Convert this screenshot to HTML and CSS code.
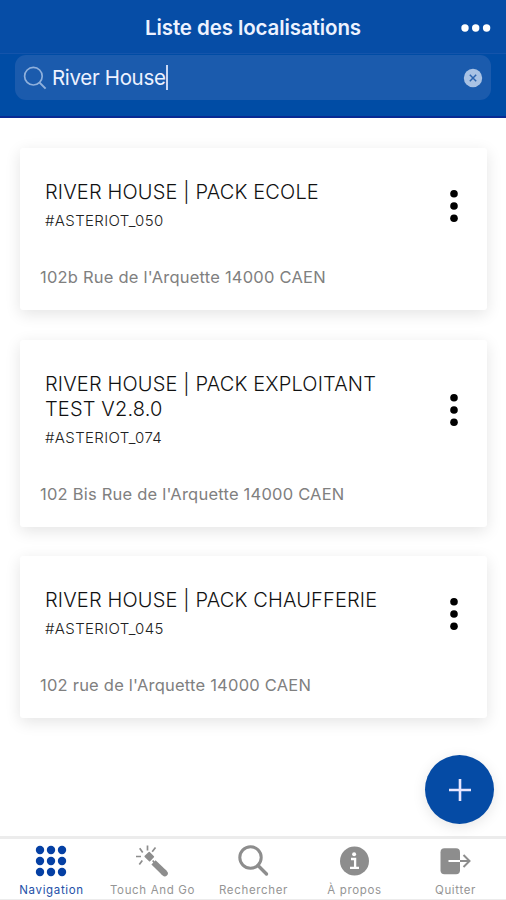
FILE: index.html
```html
<!DOCTYPE html>
<html lang="fr">
<head>
<meta charset="utf-8">
<meta name="viewport" content="width=device-width, initial-scale=1">
<title>Liste des localisations</title>
<link rel="stylesheet" href="styles.css">
</head>
<body>
<div class="app">
  <header class="topbar">
    <h1 class="topbar-title">Liste des localisations</h1>
    <svg class="topbar-more" width="30" height="8" viewBox="0 0 30 8" fill="#fff"><circle cx="4" cy="4" r="3.7"/><circle cx="14.7" cy="4" r="3.7"/><circle cx="25.6" cy="4" r="3.7"/></svg>
  </header>
  <div class="search">
    <div class="search-field">
      <svg width="24" height="24" viewBox="0 0 24 24" fill="none" stroke="#8fb0dc" stroke-width="1.7"><circle cx="10.4" cy="10.2" r="8.8"/><path d="M16.6 16.6l6 6" stroke-width="2"/></svg>
      <span class="search-text">River House</span><span class="caret"></span>
      <svg class="search-clear" width="20" height="20" viewBox="0 0 20 20"><circle cx="10" cy="10" r="9.2" fill="#a9c2e4"/><path d="M6.8 6.8l6.4 6.4M13.2 6.8l-6.4 6.4" stroke="#2d65b0" stroke-width="1.5"/></svg>
    </div>
  </div>
  <main class="list">
    <article class="card">
      <div class="card-head">
        <div class="card-titles">
          <h2 class="card-title">RIVER HOUSE | PACK ECOLE</h2>
          <p class="card-tag">#ASTERIOT_050</p>
        </div>
        <svg class="card-menu" width="10" height="34" viewBox="0 0 10 34"><circle cx="5" cy="4.8" r="3.8"/><circle cx="5" cy="17" r="3.8"/><circle cx="5" cy="29.2" r="3.8"/></svg>
      </div>
      <p class="card-address">102b Rue de l'Arquette 14000 CAEN</p>
    </article>
    <article class="card">
      <div class="card-head">
        <div class="card-titles">
          <h2 class="card-title">RIVER HOUSE | PACK EXPLOITANT<br>TEST V2.8.0</h2>
          <p class="card-tag">#ASTERIOT_074</p>
        </div>
        <svg class="card-menu" width="10" height="34" viewBox="0 0 10 34"><circle cx="5" cy="4.8" r="3.8"/><circle cx="5" cy="17" r="3.8"/><circle cx="5" cy="29.2" r="3.8"/></svg>
      </div>
      <p class="card-address">102 Bis Rue de l'Arquette 14000 CAEN</p>
    </article>
    <article class="card">
      <div class="card-head">
        <div class="card-titles">
          <h2 class="card-title">RIVER HOUSE | PACK CHAUFFERIE</h2>
          <p class="card-tag">#ASTERIOT_045</p>
        </div>
        <svg class="card-menu" width="10" height="34" viewBox="0 0 10 34"><circle cx="5" cy="4.8" r="3.8"/><circle cx="5" cy="17" r="3.8"/><circle cx="5" cy="29.2" r="3.8"/></svg>
      </div>
      <p class="card-address">102 rue de l'Arquette 14000 CAEN</p>
    </article>
  </main>
  <div class="fab">
    <svg width="22" height="22" viewBox="0 0 22 22" stroke="#e9e6ff" stroke-width="2.6"><path d="M11 0v22M0 11h22"/></svg>
  </div>
  <nav class="tabs">
    <div class="tab tab-active">
      <svg width="32" height="32" viewBox="0 0 32 32" fill="#0540a4"><circle cx="5" cy="5" r="4.2"/><circle cx="16" cy="5" r="4.2"/><circle cx="27" cy="5" r="4.2"/><circle cx="5" cy="16" r="4.2"/><circle cx="16" cy="16" r="4.2"/><circle cx="27" cy="16" r="4.2"/><circle cx="5" cy="27" r="4.2"/><circle cx="16" cy="27" r="4.2"/><circle cx="27" cy="27" r="4.2"/></svg>
      <span>Navigation</span>
    </div>
    <div class="tab">
      <svg width="32" height="32" viewBox="0 0 32 32" fill="none" stroke="#8d8d8d"><path d="M11.5 .5v5M19.5 2.5l-3.3 4.3M3.700 3.200l3 4.200M0 11.500h5M6.300 15.500l-3 4M16.700 15.500l2.300 3" stroke-width="1.7"/><path d="M9.200 11.400l4.400 4.400 3.800-4-4.200-4.200z" fill="#8d8d8d" stroke-width="1.500" stroke-linejoin="round"/><path d="M17.500 17.300l11 10.700" stroke-width="6"/><path d="M27.800 27.400l1 1" stroke-width="6" stroke-linecap="round"/></svg>
      <span>Touch And Go</span>
    </div>
    <div class="tab">
      <svg width="32" height="32" viewBox="0 0 32 32" fill="none" stroke="#8d8d8d" stroke-width="3"><circle cx="13.500" cy="12.500" r="10.700"/><path d="M21 20.500l8.500 8.500" stroke-width="3.400" stroke-linecap="round"/></svg>
      <span>Rechercher</span>
    </div>
    <div class="tab">
      <svg width="32" height="32" viewBox="0 0 32 32"><circle cx="16.500" cy="16" r="14.500" fill="#8d8d8d"/><circle cx="16.100" cy="9.300" r="2" fill="#fff"/><path d="M13 14h4.100v8.600M12 22.800h9" fill="none" stroke="#fff" stroke-width="2.300"/></svg>
      <span>À propos</span>
    </div>
    <div class="tab">
      <svg width="32" height="32" viewBox="0 0 32 32"><rect x="1.500" y="3.300" width="19.500" height="26" rx="4" fill="#8d8d8d"/><path d="M9.500 16H21" stroke="#fff" stroke-width="2"/><path d="M21 16h9M24.500 10l6 6-6 6" fill="none" stroke="#8d8d8d" stroke-width="2"/></svg>
      <span>Quitter</span>
    </div>
  </nav>
</div>
</body>
</html>
```
FILE: styles.css
```css
* { box-sizing: border-box; margin: 0; padding: 0; }
body { background: #fff; font-family: Inter, "Liberation Sans", sans-serif; }
svg { display: block; flex: none; }
.app { position: relative; display: flex; flex-direction: column; width: 506px; height: 900px; overflow: hidden; }
.topbar { display: grid; grid-template-columns: 60px 1fr 60px; align-items: center; height: 54px; flex: none; background: #064da6; border-bottom: 1px solid #1454ab; }
.topbar-title { grid-column: 2; text-align: center; font-size: 20.5px; font-weight: 600; line-height: 24px; letter-spacing: -.1px; color: #edf2ff; padding-top: 2px; }
.topbar-more { margin: 2px 0 0 15px; }
.search { height: 64px; flex: none; padding: 1px 15px 0; background: #004ca5; border-bottom: 2px solid #082b94; }
.search-field { display: flex; align-items: center; height: 45px; padding: 0 8px; border-radius: 11px; background: #1b5bad; }
.search-text { margin-left: 5px; font-size: 20.5px; line-height: 26px; letter-spacing: -.33px; color: #edf2ff; }
.caret { width: 2px; height: 25px; background: #c9d8f4; }
.search-clear { margin-left: auto; }
.list { display: flex; flex-direction: column; gap: 29.5px; flex: 1; padding: 30px 19px 0 20px; }
.card { background: #fff; border-radius: 3px; padding: 32px 20px 21px; box-shadow: 0 4px 16px rgba(0,0,0,.11); }
.card-head { display: flex; align-items: center; justify-content: space-between; padding: 0 8px 0 5px; }
.card-title { font-size: 20px; font-weight: 300; line-height: 25px; letter-spacing: .15px; color: #111; }
.card-tag { margin-top: 4px; font-size: 15px; line-height: 23px; letter-spacing: .35px; color: #222; font-weight: 300; }
.card-address { margin-top: 33px; font-size: 16.5px; line-height: 24px; letter-spacing: .22px; color: #808080; font-weight: 400; }
.fab { position: absolute; left: 425px; top: 755px; width: 69px; height: 69px; border-radius: 50%; background: #054ba5; display: flex; align-items: center; justify-content: center; box-shadow: 0 3px 14px rgba(0,0,0,.1); }
.tabs { display: grid; grid-template-columns: repeat(5, 101px); height: 64px; flex: none; padding-left: 1px; background: #fff; border-top: 3px solid #ececec; border-bottom: 1px solid #ececec; }
.tab { display: flex; flex-direction: column; align-items: center; padding-top: 6px; font-size: 11.5px; line-height: 16px; letter-spacing: .65px; color: #959595; white-space: nowrap; }
.tab svg { margin-right: 1px; }
.tab span { margin-top: 5px; }
.tab-active { color: #2450a8; }
```
